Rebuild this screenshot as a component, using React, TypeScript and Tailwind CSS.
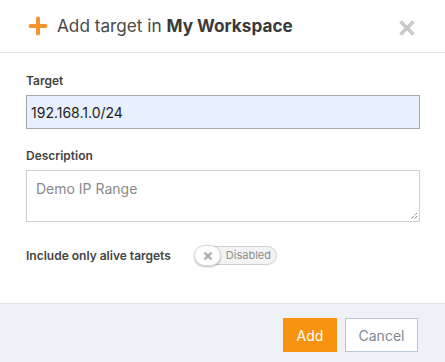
import React from "react";

export default function App() {
  return (
    <div
      className="w-[445px] h-[362px] bg-white flex flex-col overflow-hidden"
      style={{ fontFamily: "Inter, 'Noto Sans', sans-serif" }}
    >
      {/* Header */}
      <div className="h-[53px] shrink-0 border-b border-[#e3e3e3] flex items-center pl-[28px] pr-[29px]">
        <svg width="20" height="20" viewBox="0 0 20 20" className="shrink-0">
          <path d="M10 2.5V17.5M2.5 10H17.5" stroke="#f7932f" strokeWidth="4" strokeLinecap="round" />
        </svg>
        <div className="ml-[9px] text-[17.2px] leading-none text-[#4a4a4a]">
          Add target in <span className="font-bold text-[#3a3a3a]">My Workspace</span>
        </div>
        <div className="flex-1" />
        <svg width="18" height="18" viewBox="0 0 18 18" className="shrink-0 mt-[3px]">
          <path d="M2.5 2.5L15.5 15.5M15.5 2.5L2.5 15.5" stroke="#c9c9c9" strokeWidth="3.6" strokeLinecap="butt" />
        </svg>
      </div>

      {/* Body */}
      <div className="flex-1 pl-[26px] pr-[25px] pt-[20px] flex flex-col">
        <label className="text-[12px] leading-[16px] font-semibold text-[#444]">Target</label>
        <div className="mt-[6px] h-[34px] border border-[#a9a9a9] bg-[#e8f0fe] flex items-center pl-[4px] text-[14px] text-[#222]">
          192.168.1.0/24
        </div>

        <label className="mt-[19px] text-[12px] leading-[16px] font-semibold text-[#444]">Description</label>
        <div className="mt-[6px] h-[52px] border border-[#cfcfcf] relative pl-[9px] pt-[8px] text-[14px] leading-[20px] text-[#8a8a8a]">
          Demo IP Range
          <svg width="10" height="10" viewBox="0 0 10 10" className="absolute right-[1px] bottom-[1px]">
            <path d="M9 3L3 9M9 6L6 9" stroke="#555" strokeWidth="1" strokeDasharray="1 1" />
          </svg>
        </div>

        <div className="mt-[23px] flex items-center">
          <span className="text-[12px] leading-[16px] font-semibold text-[#444] w-[168px]">
            Include only alive targets
          </span>
          <div className="relative h-[21px] w-[83px]">
            <div className="absolute left-[8px] right-0 top-[1px] h-[19px] rounded-full border border-[#cfcfcf] bg-[#f3f3f3] flex items-center justify-end pr-[5px] text-[11px] text-[#8f8f8f]">
              Disabled
            </div>
            <div className="absolute left-0 top-0 h-[21px] w-[27px] rounded-full bg-white border border-[#d6d6d6] shadow-[0_1px_2px_rgba(0,0,0,0.25)] flex items-center justify-center">
              <svg width="10" height="10" viewBox="0 0 10 10">
                <path d="M1.5 1.5L8.5 8.5M8.5 1.5L1.5 8.5" stroke="#a8a8a8" strokeWidth="2.2" />
              </svg>
            </div>
          </div>
        </div>
      </div>

      {/* Footer */}
      <div className="h-[59px] shrink-0 border-t border-[#e2e6ea] bg-[#eef1f5] flex items-start justify-end pt-[14px] pr-[27px] gap-[8px]">
        <button className="h-[34px] w-[54px] bg-[#f7930f] text-white text-[14px]">Add</button>
        <button className="h-[34px] w-[73px] bg-white border border-[#b8c7d1] text-[#7d8a94] text-[14px]">
          Cancel
        </button>
      </div>
    </div>
  );
}
